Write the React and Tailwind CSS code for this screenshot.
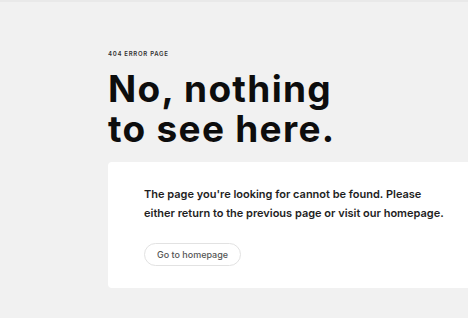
import React from "react";

const App = () => {
  return (
    <div className="h-[318px] w-full overflow-hidden bg-[#f1f1f1] border-t-2 border-[#e9e9e9] font-['Inter',sans-serif]">
      <div className="pl-[108px] pt-[48px]">
        {/* label */}
        <p className="text-[6px] font-semibold tracking-[0.12em] text-[#333] leading-[8px]">
          404 ERROR PAGE
        </p>

        {/* heading */}
        <h1 className="mt-[11px] text-[37px] font-bold leading-[40px] tracking-[0.035em] text-[#0d0d0d]">
          No, nothing
          <br />
          to see here.
        </h1>

        {/* card */}
        <div className="mt-[13px] w-[400px] h-[126px] rounded-[4px] bg-white pl-[36px] pt-[23px]">
          <p className="text-[11px] font-semibold leading-[19px] text-[#1e1e1e]">
            The page you're looking for cannot be found. Please
            <br />
            either return to the previous page or visit our homepage.
          </p>
          <button className="mt-[20px] h-[23px] w-[97px] rounded-full border border-[#e2e2e2] bg-white text-[9px] font-medium text-[#555]">
            Go to homepage
          </button>
        </div>
      </div>
    </div>
  );
};

export default App;
